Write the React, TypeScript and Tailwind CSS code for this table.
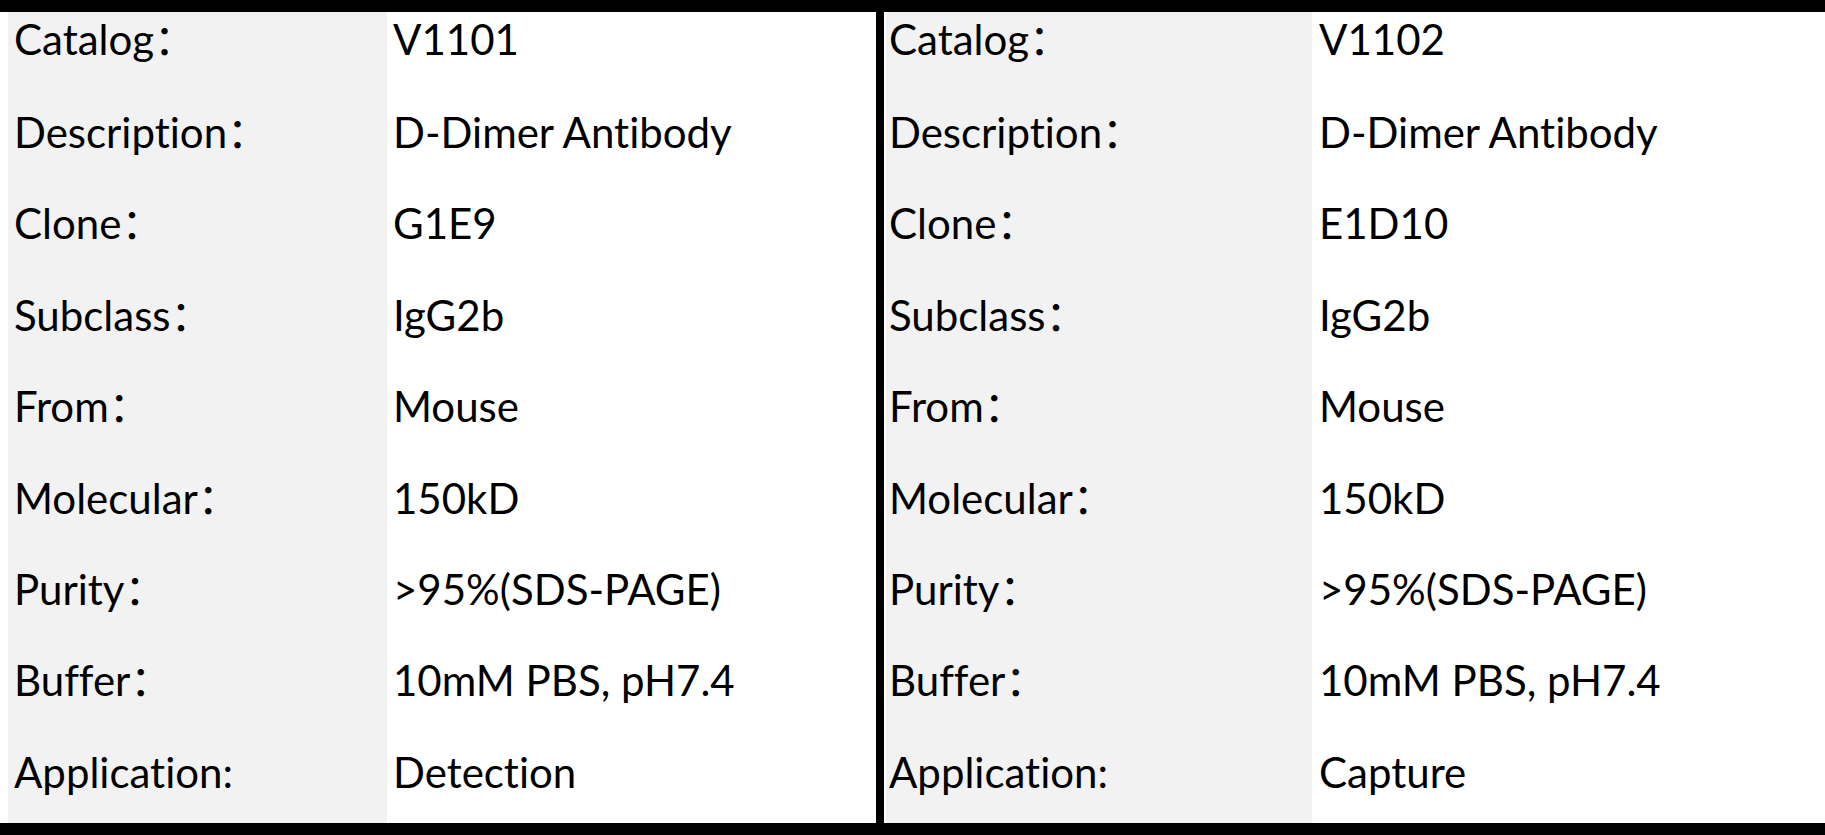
// Two antibody spec sheets side by side, cropped like a document table.

const FILAS_V1101: [string, string][] = [
  ["Catalog：", "V1101"],
  ["Description：", "D-Dimer Antibody"],
  ["Clone：", "G1E9"],
  ["Subclass：", "IgG2b"],
  ["From：", "Mouse"],
  ["Molecular：", "150kD"],
  ["Purity：", ">95%(SDS-PAGE)"],
  ["Buffer：", "10mM PBS, pH7.4"],
  ["Application:", "Detection"],
];

const FILAS_V1102: [string, string][] = [
  ["Catalog：", "V1102"],
  ["Description：", "D-Dimer Antibody"],
  ["Clone：", "E1D10"],
  ["Subclass：", "IgG2b"],
  ["From：", "Mouse"],
  ["Molecular：", "150kD"],
  ["Purity：", ">95%(SDS-PAGE)"],
  ["Buffer：", "10mM PBS, pH7.4"],
  ["Application:", "Capture"],
];

function Ficha({
  filas,
  colunas,
  padRotulo,
  padValor,
}: {
  filas: [string, string][];
  colunas: string;
  padRotulo: string;
  padValor: string;
}) {
  return (
    <div className={`grid h-full grid-rows-[80px_repeat(8,minmax(0,1fr))] ${colunas}`}>
      {filas.map(([rotulo, valor], i) => (
        <div key={rotulo} className="contents">
          <div
            className={`bg-[#f2f2f2] ${padRotulo} ${i === 0 ? "pt-[6px]" : "pt-[19px]"}`}
          >
            {rotulo}
          </div>
          <div className={`bg-white ${padValor} ${i === 0 ? "pt-[6px]" : "pt-[19px]"}`}>
            {valor}
          </div>
        </div>
      ))}
    </div>
  );
}

export default function App() {
  return (
    <div
      className="flex h-[835px] w-[1825px] flex-col overflow-hidden bg-white text-[42px] leading-none text-black [font-variant-ligatures:none]"
      style={{ fontFamily: '"Lato", "Noto Sans CJK SC", sans-serif' }}
    >
      <div className="h-[12px] shrink-0 bg-black" />
      <div className="flex min-h-0 flex-1">
        <div className="w-[8px] shrink-0" />
        <div className="w-[868px] shrink-0">
          <Ficha
            filas={FILAS_V1101}
            colunas="grid-cols-[379px_489px]"
            padRotulo="pl-[6px]"
            padValor="pl-[6px]"
          />
        </div>
        <div className="w-[8px] shrink-0 bg-black" />
        <div className="w-[2px] shrink-0" />
        <div className="min-w-0 flex-1">
          <Ficha
            filas={FILAS_V1102}
            colunas="grid-cols-[426px_minmax(0,1fr)]"
            padRotulo="pl-[3px]"
            padValor="pl-[7px]"
          />
        </div>
      </div>
      <div className="h-[12px] shrink-0 bg-black" />
    </div>
  );
}
